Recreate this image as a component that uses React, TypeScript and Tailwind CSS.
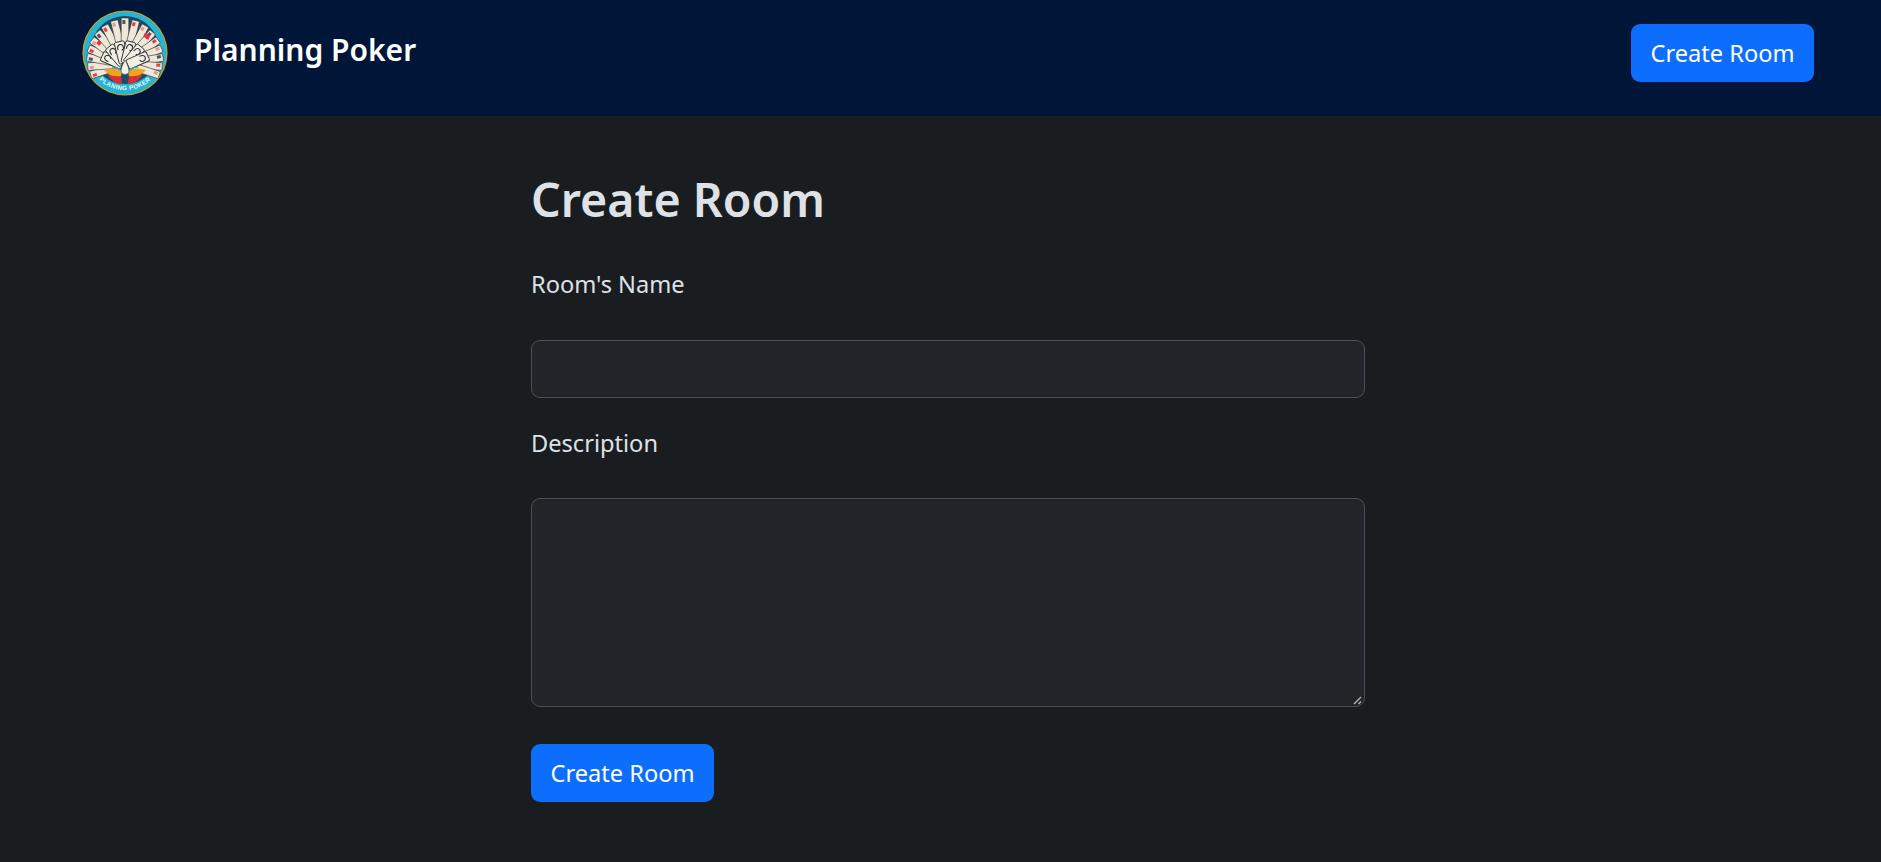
import React from "react";

const outerCards = [-108, -94, -80, -67, -54, -41, -28, -14, 0, 14, 28, 41, 54, 67, 80, 94, 108];
const innerCards = [-66, -40, -14, 14, 40, 66];
const pipColors = ["#e8403f", "#e79a98", "#55525a"];

const Logo: React.FC = () => {
  return (
    <svg width="86" height="86" viewBox="0 0 86 86" className="shrink-0">
      <defs>
        <path id="logo-arc" d="M14.5 67 A37.5 37.5 0 0 0 71.5 67" fill="none" />
      </defs>
      <circle cx="43" cy="43" r="42.6" fill="#c9a227" />
      <circle cx="43" cy="43" r="41.4" fill="#27b4d2" />
      <circle cx="43" cy="40" r="34" fill="#1d4a68" />
      {outerCards.map((angle, i) => {
        const len = 46 - (Math.abs(angle) / 108) * 10;
        return (
          <g key={angle} transform={`rotate(${angle} 43 54)`}>
            <rect x="39.2" y={54 - len} width="7.6" height={len - 8} rx="1" fill="#eee8d8" stroke="#33333a" strokeWidth="0.6" />
            <rect x="40.4" y={56 - len} width="3" height="4" fill={pipColors[i % 3]} />
          </g>
        );
      })}
      <path d="M66 24 c-2.2-2.4-5-.6-4 2.2 c.6 1.6 2.6 3 4.4 3.6 c1-1.6 2-4.2 -.4-5.8z" fill="#e8333a" />
      <path d="M17 30 l2.6 3 l-2.6 3 l-2.6-3z" fill="#e8333a" />
      {innerCards.map((angle) => (
        <g key={angle} transform={`rotate(${angle} 43 56)`}>
          <rect x="38" y="31" width="10" height="22" rx="1.4" fill="#f2eee2" stroke="#2e2e35" strokeWidth="0.9" />
          <path d="M40 39 q0-5 3-5 q3 0 3 3.4 q0 2.6-2.4 2.6" fill="none" stroke="#2e2e35" strokeWidth="1.1" />
        </g>
      ))}
      <path d="M22 60 q9-3 18 0 l-1 7 q-9 2-17-7z" fill="#f0a41f" />
      <path d="M64 60 q-9-3-18 0 l1 7 q9 2 17-7z" fill="#f0a41f" />
      <path d="M25 64 q7 3 14 2 l1 8 q-9 0-15-10z" fill="#d5303a" />
      <path d="M61 64 q-7 3-14 2 l-1 8 q9 0 15-10z" fill="#d5303a" />
      <path d="M43 50 q5 9 3.6 13 q-3.6 3-7.2 0 q-1.4-4 3.6-13z" fill="#f6f2e8" stroke="#3b3a3f" strokeWidth="0.5" />
      <path d="M30 57 q6 0 9 4 M56 57 q-6 0-9 4" fill="none" stroke="#2ca7c8" strokeWidth="1.4" />
      <text fontSize="6.2" fontWeight="700" fill="#e9f7fb" letterSpacing="0.4" fontFamily="'Liberation Sans', sans-serif">
        <textPath href="#logo-arc" startOffset="50%" textAnchor="middle">
          PLANING POKER
        </textPath>
      </text>
    </svg>
  );
};

const App: React.FC = () => {
  return (
    <div className="min-h-[862px] bg-[#1a1d20] font-['Noto_Sans','Open_Sans',sans-serif] text-[#dee2e6]">
      <nav className="flex h-[116px] items-center justify-between bg-[#001639] pl-[82px] pr-[67px]">
        <div className="flex items-center gap-[26px] pb-[10px]">
          <Logo />
          <span className="relative top-[-4px] text-[30px] font-semibold text-white">Planning Poker</span>
        </div>
        <button className="mb-[10px] h-[58px] w-[183px] rounded-[9px] bg-[#0d6efd] pt-[2px] text-[23.6px] text-white">Create Room</button>
      </nav>

      <main className="ml-[531px] w-[834px]">
        <h1 className="mt-[54px] text-[46.6px] font-semibold leading-[58px]">Create Room</h1>

        <label className="mt-[38px] block text-[23.6px] leading-[36px]">Room&#39;s Name</label>
        <input className="mt-[38px] block h-[58px] w-full rounded-[9px] border border-[#495057] bg-[#212529]" />

        <label className="mt-[27px] block text-[23.6px] leading-[36px]">Description</label>
        <div className="relative mt-[37px]">
          <textarea className="block h-[209px] w-full resize-none rounded-[9px] border border-[#495057] bg-[#212529]" />
          <svg width="9" height="9" viewBox="0 0 9 9" className="pointer-events-none absolute bottom-[2px] right-[3px]">
            <path d="M1 8 L8 1 M5.5 8 L8 5.5" stroke="#b5b5b5" strokeWidth="1.4" />
          </svg>
        </div>

        <button className="mt-[37px] h-[58px] w-[183px] rounded-[9px] bg-[#0d6efd] pt-[2px] text-[23.6px] text-white">Create Room</button>
      </main>
    </div>
  );
};

export default App;
